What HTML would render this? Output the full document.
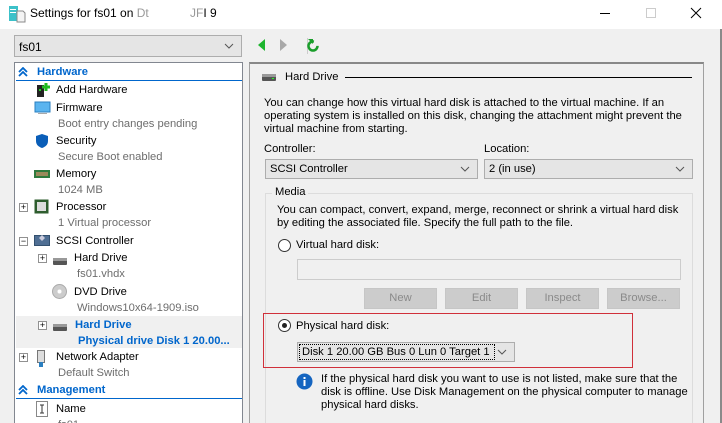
<!DOCTYPE html>
<html><head><meta charset="utf-8"><style>
*{box-sizing:border-box;margin:0;padding:0}
html,body{width:722px;height:423px;overflow:hidden}
body{background:#f0f0f0;font-family:"Liberation Sans",sans-serif;font-size:11.2px;color:#000;position:relative}
.a{position:absolute;white-space:nowrap}
.g{color:#6d6d6d}
.combo{position:absolute;background:#e5e5e5;border:1px solid #adadad}
.chev{position:absolute;right:7px;top:4px}
.btn{position:absolute;background:#ccc;border:1px solid #c6c6c6;color:#8a8a8a;text-align:center;line-height:18px}
.plus{position:absolute;width:9px;height:9px;border:1px solid #919191;background:#fff;font-size:9px;line-height:7px;text-align:center;color:#000}
.radio{position:absolute;width:13px;height:13px;border:1px solid #333;border-radius:50%;background:#fff}
</style></head><body>
<div class="a" style="left:0;top:0;width:722px;height:29px;background:#fff"></div>
<svg class="a" style="left:8px;top:5px" width="18" height="18"><rect x="1" y="1" width="9" height="15" fill="#3cc1c9"/><rect x="2" y="4" width="6" height="1" fill="#fff"/><rect x="2" y="7" width="6" height="1" fill="#fff"/><path d="M9 6h6l2 2v9H9z" fill="#f4f4f4" stroke="#8a8a8a"/></svg>
<div class="a" style="left:30px;top:6px;font-size:12px">Settings for fs01 on <span style="color:#999">Dt</span></div>
<div class="a" style="left:190px;top:6px;font-size:12px"><span style="color:#999">JF</span>I 9</div>
<div class="a" style="left:600px;top:13px;width:10px;height:1px;background:#000"></div>
<div class="a" style="left:646px;top:8px;width:10px;height:10px;border:1px solid #ccc"></div>
<svg class="a" style="left:690px;top:7px" width="12" height="12"><path d="M1 1L11 11M11 1L1 11" stroke="#000"/></svg>
<div class="a" style="left:720px;top:29px;width:2px;height:394px;background:#8a8a8a"></div>

<div class="combo" style="left:14px;top:35px;width:228px;height:22px"><span class="a" style="left:4px;top:4px;font-size:12px">fs01</span><svg class="chev" width="10" height="10" style="top:6px"><path d="M1 2l4 4 4-4" stroke="#555" fill="none"/></svg></div>
<svg class="a" style="left:255px;top:38px" width="70" height="16"><path d="M3 7l7-6v12z" fill="#1eb52e"/><path d="M25 1l7 6-7 6z" fill="#a8a8a8"/><rect x="52" y="0" width="1" height="16" fill="#ccc"/><circle cx="58" cy="8" r="4.5" stroke="#1a9e2b" stroke-width="2.5" fill="none" stroke-dasharray="22 6"/><path d="M53 1h5v5z" fill="#1a9e2b"/></svg>

<!-- tree -->
<div class="a" style="left:14px;top:62px;width:229px;height:361px;background:#fff;border:1px solid #828790;border-bottom:none"></div>
<div class="a" style="left:16px;top:316px;width:226px;height:32px;background:#f0f0f0"></div>
<div class="a" style="left:16px;top:80px;width:226px;height:1px;background:#0066cc"></div>
<div class="a" style="left:16px;top:398px;width:226px;height:1px;background:#0066cc"></div>
<svg class="a" style="left:18px;top:67px" width="10" height="10"><path d="M1 5l4-4 4 4M1 9l4-4 4 4" stroke="#0066cc" stroke-width="1.8" fill="none"/></svg>
<div class="a" style="left:37px;top:66px;color:#0066cc;font-weight:bold">Hardware</div>
<svg class="a" style="left:18px;top:385px" width="10" height="10"><path d="M1 5l4-4 4 4M1 9l4-4 4 4" stroke="#0066cc" stroke-width="1.8" fill="none"/></svg>
<div class="a" style="left:37px;top:384px;color:#0066cc;font-weight:bold">Management</div>

<svg class="a" style="left:36px;top:82px" width="16" height="17"><rect x="1" y="3" width="7" height="12" fill="#222"/><rect x="3" y="7" width="2" height="2" fill="#2c2"/><path d="M10 1v8M6 5h8" stroke="#22bb22" stroke-width="3"/></svg>
<div class="a" style="left:56px;top:84px">Add Hardware</div>
<svg class="a" style="left:34px;top:101px" width="17" height="15"><rect x="1" y="1" width="15" height="10" fill="#5ab4ef" stroke="#2a7fc0"/><rect x="4" y="12" width="9" height="1" fill="#aaa"/></svg>
<div class="a" style="left:56px;top:102px">Firmware</div>
<div class="a g" style="left:58px;top:118px">Boot entry changes pending</div>
<svg class="a" style="left:35px;top:133px" width="14" height="16"><path d="M7 1l6 2v5c0 4-3 6-6 7-3-1-6-3-6-7V3z" fill="#0a5eb8"/></svg>
<div class="a" style="left:56px;top:135px">Security</div>
<div class="a g" style="left:58px;top:151px">Secure Boot enabled</div>
<svg class="a" style="left:34px;top:169px" width="16" height="10"><rect x="0" y="1" width="16" height="8" fill="#2f7a3d"/><rect x="2" y="3" width="12" height="4" fill="#9a8a5a"/></svg>
<div class="a" style="left:56px;top:168px">Memory</div>
<div class="a g" style="left:58px;top:184px">1024 MB</div>
<div class="plus" style="left:19px;top:203px">+</div>
<svg class="a" style="left:34px;top:199px" width="15" height="15"><rect x="0.5" y="0.5" width="14" height="14" fill="#2e5d2e"/><rect x="3" y="3" width="9" height="9" fill="#ddd"/></svg>
<div class="a" style="left:56px;top:201px">Processor</div>
<div class="a g" style="left:58px;top:217px">1 Virtual processor</div>
<div class="plus" style="left:19px;top:237px">−</div>
<svg class="a" style="left:34px;top:233px" width="16" height="14"><rect x="0.5" y="2.5" width="15" height="10" fill="#4f6e93" stroke="#33506f"/><path d="M5 5l3-3 3 3-3 3z" fill="#ccd"/></svg>
<div class="a" style="left:56px;top:235px">SCSI Controller</div>
<div class="plus" style="left:38px;top:254px">+</div>
<svg class="a" style="left:53px;top:258px" width="14" height="8"><rect x="0" y="1" width="14" height="6" rx="1" fill="#555"/><rect x="0" y="0" width="14" height="3" fill="#999"/></svg>
<div class="a" style="left:74px;top:252px">Hard Drive</div>
<div class="a g" style="left:77px;top:268px">fs01.vhdx</div>
<svg class="a" style="left:52px;top:284px" width="15" height="15"><circle cx="7.5" cy="7.5" r="7" fill="#ccc" stroke="#aaa"/><circle cx="7.5" cy="7.5" r="2" fill="#fff"/></svg>
<div class="a" style="left:74px;top:286px">DVD Drive</div>
<div class="a g" style="left:77px;top:302px">Windows10x64-1909.iso</div>
<div class="plus" style="left:38px;top:321px">+</div>
<svg class="a" style="left:53px;top:324px" width="14" height="8"><rect x="0" y="1" width="14" height="6" rx="1" fill="#555"/><rect x="0" y="0" width="14" height="3" fill="#999"/></svg>
<div class="a" style="left:75px;top:319px;color:#0066cc;font-weight:bold">Hard Drive</div>
<div class="a" style="left:78px;top:335px;color:#0066cc;font-weight:bold">Physical drive Disk 1 20.00...</div>
<div class="plus" style="left:19px;top:353px">+</div>
<svg class="a" style="left:37px;top:350px" width="8" height="18"><rect x="0.5" y="0.5" width="7" height="12" fill="#ddd" stroke="#777"/><rect x="2" y="12" width="4" height="5" fill="#2a7fc0"/></svg>
<div class="a" style="left:56px;top:351px">Network Adapter</div>
<div class="a g" style="left:58px;top:367px">Default Switch</div>
<svg class="a" style="left:36px;top:401px" width="12" height="16"><rect x="0.5" y="0.5" width="11" height="15" fill="#fff" stroke="#888"/><path d="M4 4h4M6 4v8M4 12h4" stroke="#333"/></svg>
<div class="a" style="left:56px;top:403px">Name</div>
<div class="a g" style="left:58px;top:419px">fs01</div>

<!-- right -->
<div class="a" style="left:249px;top:62px;width:455px;height:361px;border:1px solid #a0a0a0;border-top:2px solid #888;border-bottom:none"></div>
<svg class="a" style="left:262px;top:74px" width="14" height="8"><rect x="0" y="1" width="14" height="6" rx="1" fill="#555"/><rect x="0" y="0" width="14" height="3" fill="#999"/><rect x="10" y="4" width="2" height="1" fill="#2f2"/></svg>
<div class="a" style="left:285px;top:71px">Hard Drive</div>
<div class="a" style="left:345px;top:77px;width:347px;height:1px;background:#000"></div>
<div class="a" style="left:264px;top:97px;line-height:13px">You can change how this virtual hard disk is attached to the virtual machine. If an<br>operating system is installed on this disk, changing the attachment might prevent the<br>virtual machine from starting.</div>
<div class="a" style="left:264px;top:143px">Controller:</div>
<div class="a" style="left:484px;top:143px">Location:</div>
<div class="combo" style="left:265px;top:159px;width:213px;height:20px"><span class="a" style="left:4px;top:3px">SCSI Controller</span><svg class="chev" width="10" height="10"><path d="M1 3l4 4 4-4" stroke="#555" fill="none"/></svg></div>
<div class="combo" style="left:484px;top:159px;width:209px;height:20px"><span class="a" style="left:4px;top:3px">2 (in use)</span><svg class="chev" width="10" height="10"><path d="M1 3l4 4 4-4" stroke="#555" fill="none"/></svg></div>
<div class="a" style="left:265px;top:193px;width:428px;height:230px;border:1px solid #dcdcdc;border-bottom:none"></div>
<div class="a" style="left:272px;top:186px;background:#f0f0f0;padding:0 3px">Media</div>
<div class="a" style="left:277px;top:204px;line-height:13px">You can compact, convert, expand, merge, reconnect or shrink a virtual hard disk<br>by editing the associated file. Specify the full path to the file.</div>
<div class="radio" style="left:278px;top:239px"></div>
<div class="a" style="left:296px;top:239px">Virtual hard disk:</div>
<div class="a" style="left:297px;top:259px;width:384px;height:21px;border:1px solid #ccc;background:#f0f0f0"></div>
<div class="btn" style="left:364px;top:288px;width:73px;height:21px">New</div>
<div class="btn" style="left:445px;top:288px;width:73px;height:21px">Edit</div>
<div class="btn" style="left:526px;top:288px;width:73px;height:21px">Inspect</div>
<div class="btn" style="left:607px;top:288px;width:73px;height:21px">Browse...</div>
<div class="a" style="left:263px;top:313px;width:370px;height:55px;border:1px solid #d0303a"></div>
<div class="radio" style="left:278px;top:319px"><div style="position:absolute;left:3px;top:3px;width:5px;height:5px;border-radius:50%;background:#222"></div></div>
<div class="a" style="left:296px;top:320px">Physical hard disk:</div>
<div class="combo" style="left:297px;top:342px;width:218px;height:20px"><span class="a" style="left:1px;top:1px;height:16px;width:196px;border:1px dotted #000;padding-left:2px;line-height:15px">Disk 1 20.00 GB Bus 0 Lun 0 Target 1</span><svg class="chev" width="10" height="10"><path d="M1 3l4 4 4-4" stroke="#555" fill="none"/></svg></div>
<svg class="a" style="left:296px;top:373px" width="17" height="17"><circle cx="8.5" cy="8.5" r="8" fill="#1565c0"/><rect x="7.5" y="7" width="2" height="6" fill="#fff"/><rect x="7.5" y="4" width="2" height="2" fill="#fff"/></svg>
<div class="a" style="left:321px;top:373px;line-height:13px">If the physical hard disk you want to use is not listed, make sure that the<br>disk is offline. Use Disk Management on the physical computer to manage<br>physical hard disks.</div>
</body></html>
